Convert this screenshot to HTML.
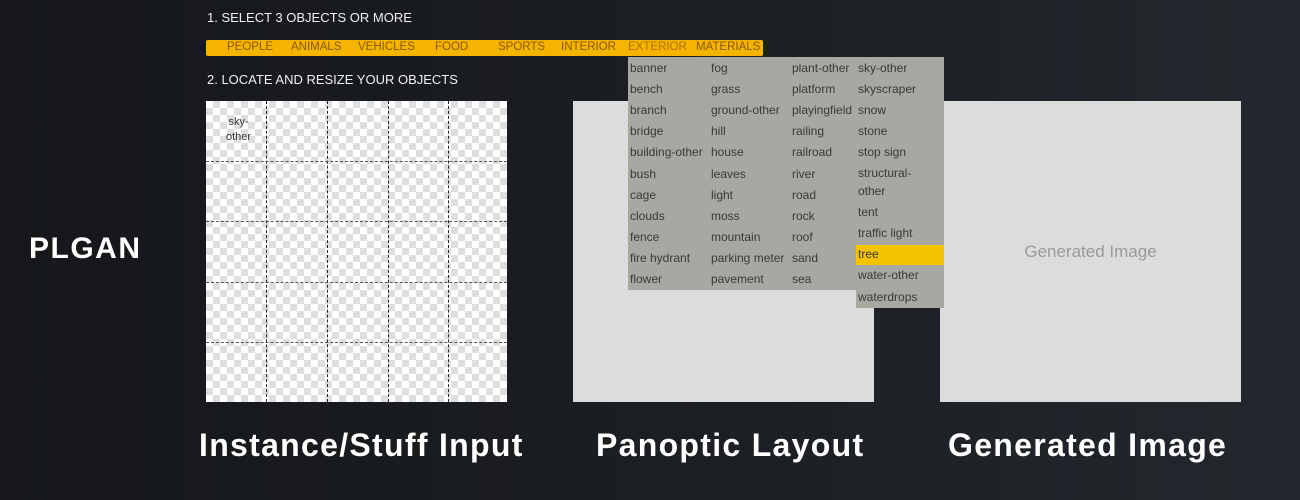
<!DOCTYPE html><html><head><style>
body{margin:0;width:1300px;height:500px;overflow:hidden;background:linear-gradient(90deg,#15171a 0%,#1b1e22 50%,#23282e 100%);font-family:"Liberation Sans",sans-serif;position:relative;color:#fff}
.a{position:absolute}
.h{font-size:13px;color:#f0f0f0}
.bar{left:206px;top:40px;width:557px;height:16px;background:#f4b400;border-radius:2px}
.bar span{position:absolute;top:1px;font-size:11.5px;color:#8a5a00}
.chk{left:206px;top:101px;width:301px;height:301px;background-color:#fff;background-image:linear-gradient(45deg,#dedede 25%,transparent 25%,transparent 75%,#dedede 75%),linear-gradient(45deg,#dedede 25%,transparent 25%,transparent 75%,#dedede 75%);background-size:14px 14px;background-position:0 0,7px 7px}
.vl{position:absolute;top:0;height:301px;border-left:1px dashed #222}
.hl{position:absolute;left:0;width:301px;border-top:1px dashed #555}
.pan{left:573px;top:101px;width:301px;height:301px;background:#dcdcdc}
.gen{left:940px;top:101px;width:301px;height:301px;background:#dcdcdc;color:#9a9a9a;font-size:17px;display:flex;align-items:center;justify-content:center}
.menu{background:#a8a8a3}
.it{position:absolute;font-size:12px;color:#3a3a34;white-space:nowrap}
.t{font-weight:bold;font-size:32px;top:427px;letter-spacing:1.3px}
</style></head><body>
<div class="a h" style="left:207px;top:10px">1. SELECT 3 OBJECTS OR MORE</div>
<div class="a bar">
<span style="left:21px">PEOPLE</span><span style="left:85px">ANIMALS</span><span style="left:152px">VEHICLES</span><span style="left:229px">FOOD</span><span style="left:292px">SPORTS</span><span style="left:355px">INTERIOR</span><span style="left:422px;color:#b07000">EXTERIOR</span><span style="left:490px">MATERIALS</span></div>
<div class="a h" style="left:207px;top:72px">2. LOCATE AND RESIZE YOUR OBJECTS</div>
<div class="a chk">
<div class="vl" style="left:60px"></div><div class="vl" style="left:121px"></div><div class="vl" style="left:182px"></div><div class="vl" style="left:242px"></div>
<div class="hl" style="top:60px"></div><div class="hl" style="top:120px"></div><div class="hl" style="top:181px"></div><div class="hl" style="top:241px"></div>
<div style="position:absolute;left:20px;top:14px;font-size:11px;color:#333;text-align:center;line-height:15px">sky-<br>other</div>
</div>
<div class="a pan"></div>
<div class="a gen">Generated Image</div>
<div class="a menu" style="left:628px;top:57px;width:316px;height:233px"></div>
<div class="a menu" style="left:856px;top:57px;width:88px;height:251px"></div>
<div class="a" style="left:856px;top:245px;width:88px;height:20px;background:#f4c400"></div>
<div id="m"></div>
<div class="a" style="font-weight:bold;font-size:30px;left:29px;top:232px;letter-spacing:1.5px">PLGAN</div>
<div class="a t" style="left:199px">Instance/Stuff Input</div>
<div class="a t" style="left:596px">Panoptic Layout</div>
<div class="a t" style="left:948px">Generated Image</div>
<script>
var cols=[[630,["banner","bench","branch","bridge","building-other","bush","cage","clouds","fence","fire hydrant","flower"]],[711,["fog","grass","ground-other","hill","house","leaves","light","moss","mountain","parking meter","pavement"]],[792,["plant-other","platform","playingfield","railing","railroad","river","road","rock","roof","sand","sea"]]];
var h="";cols.forEach(function(c){c[1].forEach(function(t,i){h+='<div class="it" style="left:'+c[0]+'px;top:'+(61+i*21.1)+'px">'+t+'</div>'})});
var c4=[["sky-other",61],["skyscraper",82],["snow",103],["stone",124],["stop sign",145],["structural-",166],["other",184],["tent",205],["traffic light",226],["tree",247],["water-other",268],["waterdrops",290]];
c4.forEach(function(x){h+='<div class="it" style="left:858px;top:'+x[1]+'px">'+x[0]+'</div>'});
document.getElementById("m").innerHTML=h;
</script>
</body></html>
